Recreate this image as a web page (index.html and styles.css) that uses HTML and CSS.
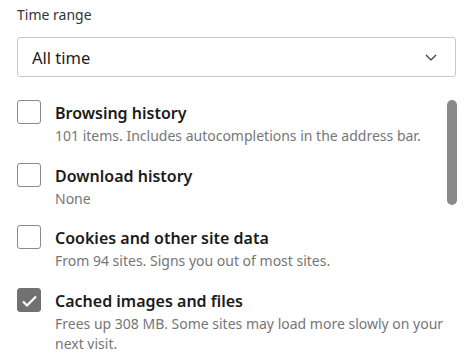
FILE: index.html
```html
<!DOCTYPE html>
<html lang="en">
<head>
    <meta charset="UTF-8">
    <meta name="viewport" content="width=device-width, initial-scale=1.0">
    <title>Clear browsing data</title>
    <link rel="stylesheet" href="styles.css">
</head>
<body>
    <!-- time range -->
    <div class="field-label">Time range</div>
    <div class="select">
        <span class="select-value">All time</span>
        <svg class="chevron" width="12" height="8" viewBox="0 0 12 8">
            <polyline points="1,1 6,6 11,1" fill="none" stroke="#333" stroke-width="1.2"/>
        </svg>
    </div>

    <!-- data types -->
    <div class="options">
        <div class="option">
            <span class="checkbox"></span>
            <div class="option-text">
                <div class="option-title">Browsing history</div>
                <div class="option-desc">101 items. Includes autocompletions in the address bar.</div>
            </div>
        </div>
        <div class="option">
            <span class="checkbox"></span>
            <div class="option-text">
                <div class="option-title">Download history</div>
                <div class="option-desc">None</div>
            </div>
        </div>
        <div class="option">
            <span class="checkbox"></span>
            <div class="option-text">
                <div class="option-title">Cookies and other site data</div>
                <div class="option-desc">From 94 sites. Signs you out of most sites.</div>
            </div>
        </div>
        <div class="option">
            <span class="checkbox checked">
                <svg width="24" height="24" viewBox="0 0 24 24">
                    <polyline points="6,13.5 10,17.5 19,8.5" fill="none" stroke="#fff" stroke-width="2.2"/>
                </svg>
            </span>
            <div class="option-text">
                <div class="option-title">Cached images and files</div>
                <div class="option-desc">Frees up 308 MB. Some sites may load more slowly on your next visit.</div>
            </div>
        </div>

        <!-- scrollbar thumb -->
        <div class="scroll-thumb"></div>
    </div>
</body>
</html>
```

FILE: styles.css
```css
* {
    margin: 0;
    padding: 0;
    box-sizing: border-box;
}

body {
    font-family: 'Segoe UI', 'Noto Sans', sans-serif;
    background: #fff;
    color: #1b1b1b;
    padding: 5px 18px 0 17px;
    width: 474px;
    height: 362px;
    overflow: hidden;
}

.field-label {
    font-size: 14px;
    line-height: 20px;
    color: #333;
}

.select {
    margin-top: 12px;
    height: 40px;
    border: 1px solid #c8c8c8;
    border-radius: 3px;
    display: flex;
    align-items: center;
    justify-content: space-between;
    padding: 1px 18px 0 14px;
}

.select-value {
    font-size: 16.5px;
    color: #1b1b1b;
}

.options {
    position: relative;
    margin-top: 23px;
    display: flex;
    flex-direction: column;
    gap: 16.5px;
}

.option {
    display: flex;
    gap: 14px;
}

.checkbox {
    flex: none;
    width: 24px;
    height: 24px;
    border: 1px solid #8a8a8a;
    border-radius: 3px;
    background: #fff;
}

.checkbox.checked {
    background: #717171;
    border-color: #717171;
}

.checkbox.checked svg {
    display: block;
    margin: -1px;
}

.option-text {
    width: 392px;
    padding-top: 1px;
}

.option-title {
    font-size: 16px;
    font-weight: 600;
    line-height: 24px;
    color: #1b1b1b;
}

.option-desc {
    margin-top: 1px;
    font-size: 14px;
    line-height: 20px;
    color: #767676;
}

.scroll-thumb {
    position: absolute;
    top: 0;
    right: -1px;
    width: 10px;
    height: 105px;
    border-radius: 5px;
    background: #8a8a8a;
}
```
